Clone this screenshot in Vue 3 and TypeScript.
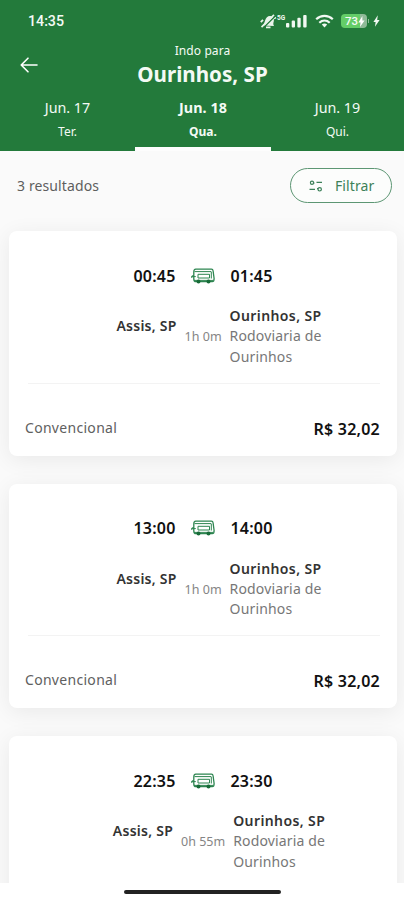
<script setup lang="ts">
interface Day {
  date: string
  weekday: string
  active?: boolean
}

interface Trip {
  departure: string
  arrival: string
  duration: string
  service?: string
  price?: string
}

const days: Day[] = [
  { date: 'Jun. 17', weekday: 'Ter.' },
  { date: 'Jun. 18', weekday: 'Qua.', active: true },
  { date: 'Jun. 19', weekday: 'Qui.' },
]

const trips: Trip[] = [
  { departure: '00:45', arrival: '01:45', duration: '1h 0m', service: 'Convencional', price: 'R$ 32,02' },
  { departure: '13:00', arrival: '14:00', duration: '1h 0m', service: 'Convencional', price: 'R$ 32,02' },
  { departure: '22:35', arrival: '23:30', duration: '0h 55m' },
]
</script>

<template>
  <div class="screen">
    <header class="header">
      <div class="status">
        <span class="clock">14:35</span>
        <div class="indicators">
          <svg class="mute" width="17" height="15" viewBox="0 0 17 15">
            <path d="M2.500 11.500c1.500-1 1.800-2.500 2.500-4.800C6 3.500 8 1.600 10.500 2c2.800.5 4 2.600 3.300 5.300-.5 2-.8 3.200.2 4.700z" fill="#e9f4eb" />
            <path d="M6 13.300h4.500M.8 8.200l2.200-2.400M14 4.500l2-1" stroke="#e9f4eb" stroke-width="1.800" />
            <path d="M3 14.200L15 2.200" stroke="#237a3b" stroke-width="1.300" />
            <path d="M1.500 13.200L14 .8" stroke="#e9f4eb" stroke-width="1.700" />
          </svg>
          <span class="network">5G</span>
          <svg class="signal" width="21" height="14" viewBox="0 0 21 14" fill="#f1f8f2">
            <rect x="0" y="9" width="3.300" height="4.500" rx="1" />
            <rect x="5.700" y="6.500" width="3.300" height="7" rx="1" />
            <rect x="11.400" y="3.800" width="3.300" height="9.700" rx="1" />
            <rect x="17.200" y="1" width="3.400" height="12.500" rx="1" />
          </svg>
          <svg class="wifi" width="19" height="14" viewBox="0 0 19 14" fill="none" stroke="#f1f8f2" stroke-width="2.200">
            <path d="M1.200 5.300c4.800-4.500 11.800-4.500 16.600 0" />
            <path d="M4.300 8.700c3.100-2.900 7.300-2.900 10.400 0" />
            <path d="M6.800 10.600c1.700-1.400 3.700-1.400 5.400 0L9.500 13.400z" fill="#f1f8f2" stroke="none" />
          </svg>
          <span class="battery">
            <span class="level">73</span>
            <svg width="7" height="11" viewBox="0 0 6 10"><path d="M3.800 0L.2 5.800h2L1.600 10 5.800 4.200h-2z" fill="#fff" /></svg>
          </span>
          <span class="battery-tip"></span>
          <svg class="charge" width="7" height="12" viewBox="0 0 7 12"><path d="M4.800.3L.4 6.900h2.200L2 11.700 6.600 5.100H4.200z" fill="#f1f8f2" /></svg>
        </div>
      </div>
      <div class="heading">
        <button class="back" aria-label="Voltar">
          <svg width="18" height="16" viewBox="0 0 18 16" fill="none" stroke="#fff" stroke-width="1.600" stroke-linecap="round" stroke-linejoin="round">
            <path d="M17 8H1.200M8 1.200L1.200 8 8 14.800" />
          </svg>
        </button>
        <div class="destination">
          <span class="direction">Indo para</span>
          <h1 class="title">Ourinhos, SP</h1>
        </div>
      </div>
      <nav class="days">
        <button v-for="day in days" :key="day.date" class="day" :class="{ active: day.active }">
          <span class="date">{{ day.date }}</span>
          <span class="weekday">{{ day.weekday }}</span>
        </button>
      </nav>
    </header>

    <main class="content">
      <div class="toolbar">
        <span class="count">3 resultados</span>
        <button class="filter">
          <svg width="14" height="12" viewBox="0 0 14 12" fill="none" stroke="#3c8159" stroke-width="1.200">
            <circle cx="3" cy="2.700" r="1.600" />
            <path d="M7.500 2.300H13M.5 9.300H6" />
            <circle cx="10.700" cy="9.300" r="1.700" />
            <path d="M4.600 3.200h.8M8 8.700h1" />
          </svg>
          <span class="filter-label">Filtrar</span>
        </button>
      </div>

      <article v-for="trip in trips" :key="trip.departure" class="card">
        <div class="times">
          <span class="time">{{ trip.departure }}</span>
          <svg class="bus" width="24" height="16" viewBox="0 0 24 16" fill="none" stroke="#2d8550" stroke-width="1.300" stroke-linejoin="round">
            <path d="M4.800 1.200h15.600q1.500 0 1.700 1.800l1 7.500q0 3.200-1.800 3.200H5Q2.800 13.700 2.800 11V4q0-2.800 2-2.800z" />
            <path d="M3.500 3.600h16.500M7 6.300h11.500V10H7zM2.800 7.500L.8 8v2M.8 8.600h4M20.300 3.600v6.900" stroke-width="1" />
            <path d="M3 12.400h19" stroke-width="1" />
            <circle cx="7.500" cy="13.500" r="2" fill="#176b38" stroke="none" />
            <circle cx="17.500" cy="13.500" r="2" fill="#176b38" stroke="none" />
          </svg>
          <span class="time">{{ trip.arrival }}</span>
        </div>
        <div class="route">
          <span class="city origin">Assis, SP</span>
          <span class="duration">{{ trip.duration }}</span>
          <div class="arrival">
            <span class="city">Ourinhos, SP</span>
            <span class="station">Rodoviaria de Ourinhos</span>
          </div>
        </div>
        <div v-if="trip.service" class="summary">
          <span class="service">{{ trip.service }}</span>
          <span class="price">{{ trip.price }}</span>
        </div>
      </article>
    </main>

    <footer class="gesture"><span class="handle"></span></footer>
  </div>
</template>

<style>
body {
  margin: 0;
}
</style>

<style scoped>
.screen {
  display: flex;
  flex-direction: column;
  width: 404px;
  height: 900px;
  overflow: hidden;
  background: #fff;
  font-family: 'Noto Sans', 'Open Sans', sans-serif;
}
button {
  margin: 0;
  padding: 0;
  border: 0;
  background: none;
  font: inherit;
  color: inherit;
}
.header {
  flex: none;
  height: 151px;
  background: #237a3b;
  color: #f4faf5;
}
.status {
  display: flex;
  align-items: center;
  justify-content: space-between;
  height: 42px;
  padding: 0 24px 0 28px;
  box-sizing: border-box;
}
.clock {
  font: 500 14.2px/20px Roboto, sans-serif;
}
.indicators {
  display: flex;
  align-items: center;
}
.network {
  align-self: flex-start;
  width: 9px;
  font: 700 6.5px/9px Roboto, sans-serif;
}
.wifi {
  margin-left: 8px;
}
.battery {
  display: flex;
  align-items: center;
  gap: 0;
  width: 26px;
  height: 14px;
  margin-left: 7px;
  padding-left: 4px;
  box-sizing: border-box;
  border-radius: 4px;
  background: linear-gradient(90deg, #64cd68 73%, #8fba98 73%);
}
.level {
  font: 500 11.500px/14px Roboto, sans-serif;
}
.battery-tip {
  width: 1px;
  height: 4px;
  margin-left: 1px;
  background: #8fba98;
}
.charge {
  margin-left: 4px;
}
.heading {
  display: grid;
  grid-template-columns: 58px 1fr 58px;
  height: 48px;
}
.back {
  display: flex;
  align-items: center;
  padding: 0 0 3px 20px;
}
.destination {
  display: flex;
  flex-direction: column;
  align-items: center;
  padding: 1px 0 0 1px;
}
.direction {
  font-size: 12px;
  line-height: 16px;
  letter-spacing: 0.1px;
}
.title {
  margin: 2px 0 0;
  font-size: 20.6px;
  font-weight: 700;
  line-height: 26px;
  white-space: nowrap;
}
.days {
  display: grid;
  grid-template-columns: 135px 136px 133px;
  height: 61px;
}
.day {
  display: flex;
  flex-direction: column;
  align-items: center;
  padding-top: 8px;
  box-sizing: border-box;
  border-bottom: 4px solid transparent;
}
.day.active {
  border-bottom-color: #fdfdfd;
  font-weight: 700;
}
.date {
  font-size: 14.3px;
  line-height: 20px;
}
.active .date {
  letter-spacing: 0.1px;
}
.weekday {
  margin-top: 6px;
  font-size: 12px;
  line-height: 16px;
}
.content {
  flex: none;
  display: flex;
  flex-direction: column;
  gap: 28px;
  height: 732px;
  padding: 0 7px 0 9px;
  box-sizing: border-box;
  overflow: hidden;
  background: #fafafa;
}
.toolbar {
  flex: none;
  display: flex;
  align-items: center;
  justify-content: space-between;
  height: 52px;
  padding: 17px 5px 0 8px;
  box-sizing: border-box;
}
.count {
  font-size: 14px;
  line-height: 20px;
  letter-spacing: 0.12px;
  color: #5e5e5e;
}
.filter {
  display: flex;
  align-items: center;
  gap: 12px;
  width: 102px;
  height: 35px;
  padding-left: 18px;
  box-sizing: border-box;
  border: 1px solid #5c9673;
  border-radius: 18px;
  background: #fcfdfc;
  color: #3c8159;
}
.filter-label {
  font-size: 14px;
  line-height: 20px;
  letter-spacing: 0.1px;
}
.card {
  flex: none;
  height: 224.6px;
  padding: 33px 17px 0;
  box-sizing: border-box;
  border-radius: 8px;
  background: #fff;
  box-shadow: 0 4px 22px rgba(0, 0, 0, 0.07);
}
.times {
  display: flex;
  align-items: center;
  justify-content: center;
  gap: 15.5px;
  height: 23px;
}
.time {
  font-size: 16px;
  font-weight: 600;
  line-height: 22px;
  letter-spacing: 0.2px;
  color: #111;
}
.route {
  display: flex;
  justify-content: center;
  gap: 8px;
  height: 96.5px;
  margin: 0 0 0 2px;
  padding: 18px 0 0 32px;
  box-sizing: border-box;
  border-bottom: 1px solid #f3f3f3;
  white-space: nowrap;
}
.city {
  font-size: 14px;
  font-weight: 600;
  line-height: 21px;
  letter-spacing: 0.4px;
  color: #333;
}
.origin {
  margin-top: 10px;
  letter-spacing: 0.25px;
}
.duration {
  margin-top: 21px;
  font-size: 12.5px;
  line-height: 21px;
  color: #858585;
}
.arrival {
  display: flex;
  flex-direction: column;
  width: 94px;
}
.station {
  font-size: 14px;
  line-height: 20.5px;
  letter-spacing: 0.15px;
  color: #777;
  white-space: normal;
}
.summary {
  display: flex;
  align-items: center;
  justify-content: space-between;
  height: 22px;
  margin-top: 33px;
}
.service {
  margin-left: -1px;
  font-size: 14px;
  line-height: 20px;
  letter-spacing: 0.3px;
  color: #606060;
}
.price {
  padding-top: 2px;
  font-size: 16px;
  font-weight: 600;
  line-height: 22px;
  letter-spacing: 0.22px;
  color: #111;
}
.gesture {
  flex: none;
  display: flex;
  justify-content: center;
  height: 17px;
  padding-top: 7px;
  box-sizing: border-box;
  background: #fff;
}
.handle {
  width: 157px;
  height: 4px;
  border-radius: 2px;
  background: #222;
}
</style>
